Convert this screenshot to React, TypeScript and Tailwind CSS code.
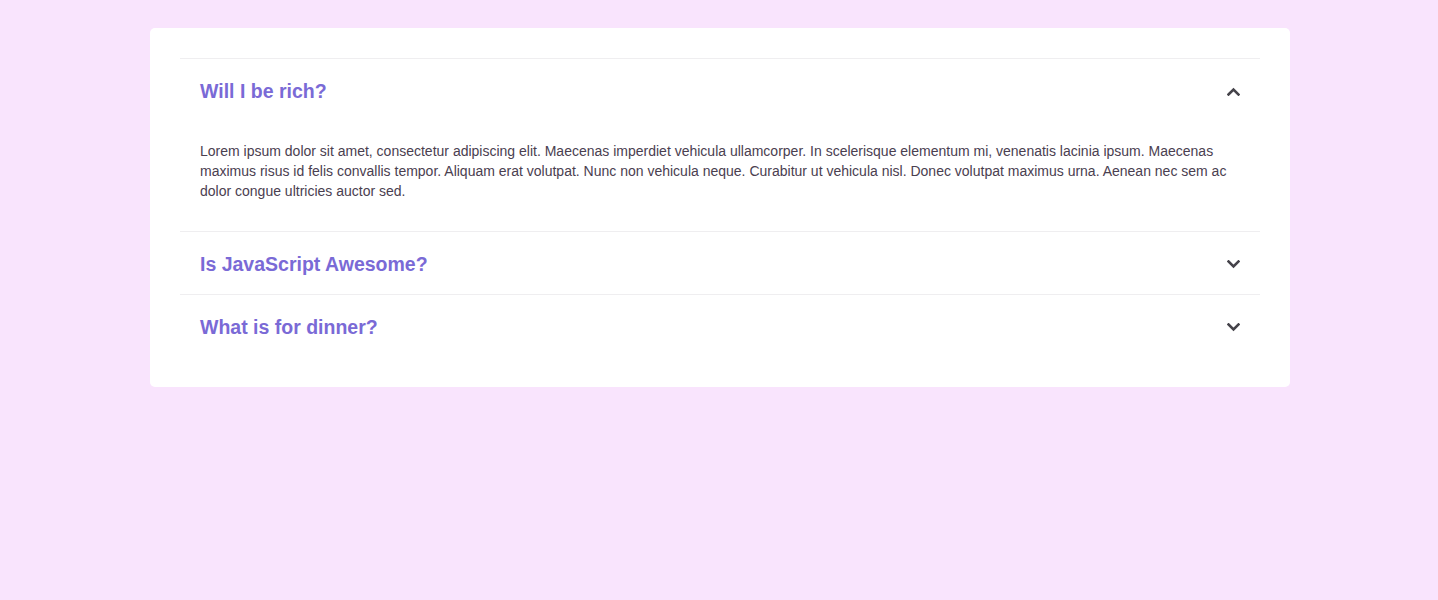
import React, { useState } from "react";

const items = [
  {
    q: "Will I be rich?",
    a: "Lorem ipsum dolor sit amet, consectetur adipiscing elit. Maecenas imperdiet vehicula ullamcorper. In scelerisque elementum mi, venenatis lacinia ipsum. Maecenas maximus risus id felis convallis tempor. Aliquam erat volutpat. Nunc non vehicula neque. Curabitur ut vehicula nisl. Donec volutpat maximus urna. Aenean nec sem ac dolor congue ultricies auctor sed.",
  },
  {
    q: "Is JavaScript Awesome?",
    a: "Lorem ipsum dolor sit amet, consectetur adipiscing elit. Maecenas imperdiet vehicula ullamcorper.",
  },
  {
    q: "What is for dinner?",
    a: "Lorem ipsum dolor sit amet, consectetur adipiscing elit. Maecenas imperdiet vehicula ullamcorper.",
  },
];

function Chevron({ up }: { up: boolean }) {
  return (
    <svg width="13" height="9" viewBox="0 0 13 9" className="shrink-0">
      {up ? (
        <path d="M1.5 7.5 L6.5 2.5 L11.5 7.5" fill="none" stroke="#45434a" strokeWidth="2.6" strokeLinecap="square" />
      ) : (
        <path d="M1.5 1.5 L6.5 6.5 L11.5 1.5" fill="none" stroke="#45434a" strokeWidth="2.6" strokeLinecap="square" />
      )}
    </svg>
  );
}

export default function App() {
  const [open, setOpen] = useState<number | null>(0);
  return (
    <div
      className="min-h-[600px] w-full bg-[#f9e4fd] pl-[150px] pt-[28px]"
      style={{ fontFamily: '"Liberation Sans", Arial, Helvetica, sans-serif' }}
    >
      <div className="w-[1140px] rounded-[5px] bg-white p-[30px]">
        {items.map((it, i) => (
          <div key={i} className="border-t border-[#efeef0]">
            <button
              onClick={() => setOpen(open === i ? null : i)}
              className="flex w-full items-center justify-between pb-[19px] pl-[20px] pr-[20px] pt-[21px] text-left"
            >
              <span className="text-[19.5px] font-bold leading-[22px] text-[#7a6ad6]">{it.q}</span>
              <Chevron up={open === i} />
            </button>
            {open === i && (
              <div className="px-[20px] pb-[30px] pt-[20px] text-[14px] leading-[20px] text-[#4a4050]">
                {it.a}
              </div>
            )}
          </div>
        ))}
      </div>
    </div>
  );
}
